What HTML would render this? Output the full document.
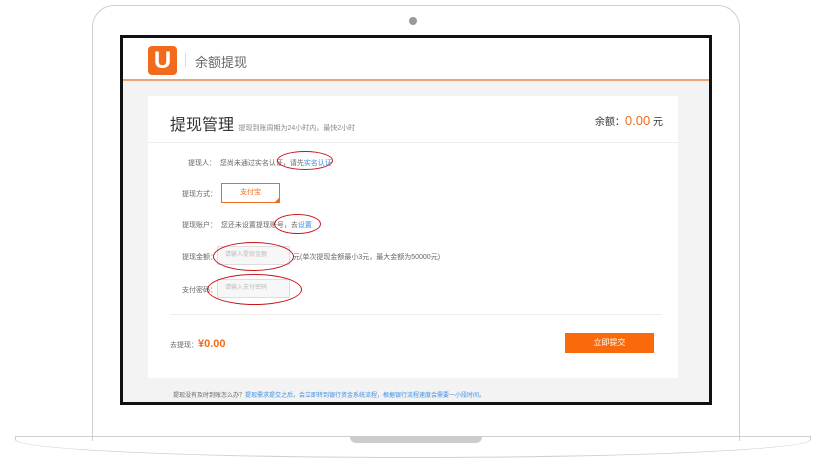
<!DOCTYPE html>
<html><head><meta charset="utf-8"><style>
*{margin:0;padding:0;box-sizing:border-box}
body{width:828px;height:464px;background:#fff;position:relative;overflow:hidden;font-family:"Liberation Sans","Noto Sans CJK SC",sans-serif;color:#555}
.a{position:absolute}
.lid{left:92px;top:5px;width:648px;height:436px;border:1.5px solid #cfcfcf;border-bottom:none;border-radius:22px 22px 0 0}
.cam{left:409px;top:17px;width:8px;height:8px;border-radius:50%;background:#999}
.scr{left:120px;top:35px;width:592px;height:370px;border:3px solid #111;background:#f3f3f3}
.hdr{left:0;top:0;width:586px;height:43px;background:#fff;border-bottom:2px solid #e9a372}
.logo{left:25px;top:8px;width:29px;height:29px;background:#f26a1b;border-radius:4px;color:#fff;font-weight:bold;font-size:24px;text-align:center;line-height:29px}
.card{left:25px;top:58px;width:530px;height:282px;background:#fff}
.lbl{font-size:7px;color:#666;white-space:nowrap}
.base{left:15px;top:436px;width:796px;height:22px;border:1.5px solid #cfcfcf;border-radius:0 0 60% 60%/0 0 100% 100%;background:#fff}
.ell{border:1.5px solid #c8141b;border-radius:50%}
.inp{width:73px;height:19px;border:1px solid #ddd;background:#f7f7f7;font-size:6px;color:#bbb;padding-left:7px;line-height:17px}
</style></head><body>
<div class="a base"></div>
<div class="a" style="left:350px;top:436px;width:132px;height:7px;background:#ccc;border-radius:0 0 6px 6px"></div>
<div class="a lid"></div>
<div class="a cam"></div>
<div class="a scr">
 <div class="a hdr">
  <div class="a logo">U</div>
  <div class="a" style="left:62px;top:15px;width:1px;height:14px;background:#ddd"></div>
  <div class="a" style="left:72px;top:14px;font-size:13px;color:#666">余额提现</div>
 </div>
 <div class="a card">
  <div class="a" style="left:22px;top:15px;font-size:16px;color:#333">提现管理 <span style="font-size:7px;color:#888">提现到账周期为24小时内，最快2小时</span></div>
  <div class="a" style="right:15px;top:17px;font-size:10px;color:#333">余额：<span style="color:#f26a1b;font-size:13px">0.00</span> 元</div>
  <div class="a" style="left:0;top:46px;width:530px;height:1px;background:#eee"></div>
  <div class="a lbl" style="left:40px;top:62px">提现人： &nbsp;您尚未通过实名认证，请先<span style="color:#3a8ee6">实名认证</span></div>
  <div class="a lbl" style="left:34px;top:93px">提现方式：</div>
  <div class="a" style="left:73px;top:87px;width:59px;height:20px;border:1.5px solid #f26a1b;color:#f26a1b;font-size:7px;text-align:center;line-height:17px">支付宝</div>
  <div class="a" style="left:126px;top:101px;width:0;height:0;border-left:6px solid transparent;border-bottom:6px solid #f26a1b"></div>
  <div class="a lbl" style="left:34px;top:124px">提现账户： &nbsp;您还未设置提现账号，去<span style="color:#3a8ee6">设置</span></div>
  <div class="a lbl" style="left:34px;top:156px">提现金额：</div>
  <div class="a inp" style="left:69px;top:150px">请输入提现金额</div>
  <div class="a lbl" style="left:145px;top:156px">元(单次提现金额最小3元，最大金额为50000元)</div>
  <div class="a lbl" style="left:34px;top:189px">支付密码：</div>
  <div class="a inp" style="left:69px;top:183px">请输入支付密码</div>
  <div class="a" style="left:22px;top:218px;width:492px;height:1px;background:#eee"></div>
  <div class="a lbl" style="left:22px;top:242px">去提现：<span style="color:#f26a1b;font-size:11px;font-weight:bold">¥0.00</span></div>
  <div class="a" style="left:417px;top:237px;width:89px;height:20px;background:#fa6a0a;color:#fff;font-size:8px;text-align:center;line-height:20px">立即提交</div>
 </div>
 <div class="a lbl" style="left:50px;top:352px;font-size:6px">提现没有及时到账怎么办？<span style="color:#3a8ee6">提现需求提交之后，会立即转到银行资金系统流程，根据银行流程速度会需要一小段时间。</span></div>
 <div class="a ell" style="left:154px;top:113px;width:56px;height:19px"></div>
 <div class="a ell" style="left:151px;top:176px;width:47px;height:20px"></div>
 <div class="a ell" style="left:90px;top:204px;width:81px;height:29px"></div>
 <div class="a ell" style="left:84px;top:236px;width:95px;height:31px"></div>
</div>
</body></html>
